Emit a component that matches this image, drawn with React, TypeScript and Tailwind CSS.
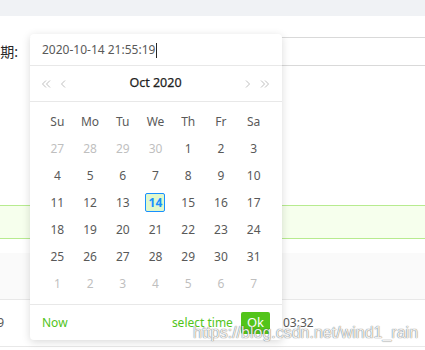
import React from 'react';

const weekDays = ['Su', 'Mo', 'Tu', 'We', 'Th', 'Fr', 'Sa'];

type Day = { n: number; other?: boolean; today?: boolean };

const weeks: Day[][] = [
  [{ n: 27, other: true }, { n: 28, other: true }, { n: 29, other: true }, { n: 30, other: true }, { n: 1 }, { n: 2 }, { n: 3 }],
  [{ n: 4 }, { n: 5 }, { n: 6 }, { n: 7 }, { n: 8 }, { n: 9 }, { n: 10 }],
  [{ n: 11 }, { n: 12 }, { n: 13 }, { n: 14, today: true }, { n: 15 }, { n: 16 }, { n: 17 }],
  [{ n: 18 }, { n: 19 }, { n: 20 }, { n: 21 }, { n: 22 }, { n: 23 }, { n: 24 }],
  [{ n: 25 }, { n: 26 }, { n: 27 }, { n: 28 }, { n: 29 }, { n: 30 }, { n: 31 }],
  [1, 2, 3, 4, 5, 6, 7].map((n) => ({ n, other: true })),
];

const Chevron = ({ dir, double }: { dir: 'left' | 'right'; double?: boolean }) => {
  const flip = dir === 'right' ? 'scale(-1,1) translate(-10,0)' : undefined;
  return (
    <svg width="10" height="10" viewBox="0 0 10 10" fill="none" stroke="#bfbfbf" strokeWidth="1">
      <g transform={flip}>
        {double ? (
          <>
            <path d="M5 1.5L1.5 5L5 8.5" />
            <path d="M9 1.5L5.5 5L9 8.5" />
          </>
        ) : (
          <path d="M6 1.5L2.5 5L6 8.5" />
        )}
      </g>
    </svg>
  );
};

const App: React.FC = () => {
  return (
    <div className="relative h-[350px] w-[425px] overflow-hidden bg-white font-['Noto_Sans','Noto_Sans_CJK_SC',sans-serif] text-[12px] text-[#595959]">
      <div className="h-4 bg-[#f0f2f5]" />

      {/* form row */}
      <div className="mt-[21px] flex h-[29px] items-center">
        <div className="flex w-[18px] shrink-0 justify-end">
          <span className="shrink-0 whitespace-nowrap text-[14px] text-[#262626]">日期:</span>
        </div>
        <div className="ml-3 h-full flex-1 border-y border-[#d9d9d9]" />
      </div>

      {/* alert */}
      <div className="mt-[139px] h-[34px] border-y border-[#b7eb8f] bg-[#f6ffed]" />

      {/* table header */}
      <div className="mt-[14px] h-[47px] border-b border-[#e8e8e8] bg-[#fafafa]" />

      {/* table row */}
      <div className="flex h-[47px] items-center border-b border-[#e8e8e8]">
        <div className="flex w-[4px] shrink-0 justify-end">
          <span className="shrink-0">19</span>
        </div>
        <span className="ml-[279px]">03:32</span>
      </div>

      {/* calendar popup */}
      <div className="absolute left-[30px] top-[34px] flex h-[306px] w-[252px] flex-col rounded-[4px] bg-white shadow-[0_2px_8px_rgba(0,0,0,0.15)]">
        <div className="flex h-[32px] shrink-0 items-center border-b border-[#e8e8e8] px-3 pt-[1px]">
          <span className="text-[#595959]">2020-10-14 21:55:19</span>
          <span className="ml-[1px] h-[15px] w-px bg-[#262626]" />
        </div>

        <div className="flex h-[36px] shrink-0 items-center border-b border-[#e8e8e8] pl-[11px] pr-[12px]">
          <Chevron dir="left" double />
          <span className="ml-[8px]">
            <Chevron dir="left" />
          </span>
          <span className="flex-1 text-center text-[12.5px] text-[#1f1f1f] [-webkit-text-stroke:0.25px_#1f1f1f]">
            Oct 2020
          </span>
          <Chevron dir="right" />
          <span className="ml-[8px]">
            <Chevron dir="right" double />
          </span>
        </div>

        <div className="pl-[11px] pr-[12px] pt-[7px]">
          <div className="grid h-[26px] grid-cols-7 items-center text-center">
            {weekDays.map((d) => (
              <span key={d}>{d}</span>
            ))}
          </div>
          {weeks.map((w, i) => (
            <div key={i} className="grid h-[27px] grid-cols-7 items-center justify-items-center">
              {w.map((d, j) =>
                d.today ? (
                  <span
                    key={j}
                    className="flex h-[19px] w-[20px] items-center justify-center rounded-[2px] border border-[#1890ff] bg-[#e0f8cc] font-bold text-[#1890ff]"
                  >
                    {d.n}
                  </span>
                ) : (
                  <span key={j} className={d.other ? 'text-[#bfbfbf]' : 'text-[#595959]'}>
                    {d.n}
                  </span>
                )
              )}
            </div>
          ))}
        </div>

        <div className="mt-auto flex h-[36px] shrink-0 items-center border-t border-[#e8e8e8] px-3">
          <span className="text-[#52c41a]">Now</span>
          <span className="ml-auto text-[#52c41a]">select time</span>
          <button className="ml-2 h-[22px] rounded-[2px] bg-[#52c41a] px-[6px] text-[13px] text-white">Ok</button>
        </div>
      </div>

      {/* watermark */}
      <div className="absolute left-[193px] top-[321px] font-['Liberation_Sans',sans-serif] text-[16px] text-white/90 [text-shadow:0_0_1px_rgba(0,0,0,0.6),0_0_1px_rgba(0,0,0,0.3)]">
        https://blog.csdn.net/wind1_rain
      </div>
    </div>
  );
};

export default App;
